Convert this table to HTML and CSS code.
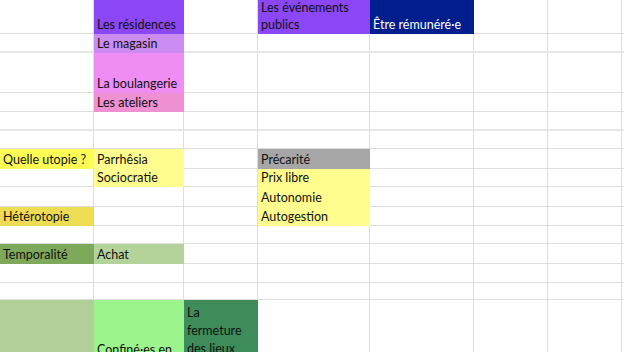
FILE: index.html
```html
<!DOCTYPE html>
<html lang="fr">
<head>
<meta charset="utf-8">
<title>Feuille</title>
<link rel="stylesheet" href="styles.css">
</head>
<body>
<div class="sheet">
  <!-- row 1 -->
  <div class="c r1"></div><div class="c r1 purple">Les résidences</div><div class="c r1"></div><div class="c r1 purple tight">Les événements publics</div><div class="c r1 navy">Être rémunéré·e</div><div class="c r1"></div><div class="c r1"></div><div class="c r1"></div>
  <!-- row 2 -->
  <div class="c r2 thick"></div><div class="c r2 mauve">Le magasin</div><div class="c r2 thick"></div><div class="c r2 thick"></div><div class="c r2 thick"></div><div class="c r2 thick"></div><div class="c r2 thick"></div><div class="c r2 thick"></div>
  <!-- row 3 -->
  <div class="c r3"></div><div class="c r3 orchid">La boulangerie</div><div class="c r3"></div><div class="c r3"></div><div class="c r3"></div><div class="c r3"></div><div class="c r3"></div><div class="c r3"></div>
  <!-- row 4 -->
  <div class="c r4"></div><div class="c r4 pink">Les ateliers</div><div class="c r4"></div><div class="c r4"></div><div class="c r4"></div><div class="c r4"></div><div class="c r4"></div><div class="c r4"></div>
  <!-- row 5 -->
  <div class="c r5 thick"></div><div class="c r5 thick"></div><div class="c r5 thick"></div><div class="c r5 thick"></div><div class="c r5 thick"></div><div class="c r5 thick"></div><div class="c r5 thick"></div><div class="c r5 thick"></div>
  <!-- row 6 -->
  <div class="c r6"></div><div class="c r6"></div><div class="c r6"></div><div class="c r6"></div><div class="c r6"></div><div class="c r6"></div><div class="c r6"></div><div class="c r6"></div>
  <!-- row 7 -->
  <div class="c r7 lemon">Quelle utopie ?</div><div class="c r7 cream">Parrhêsia</div><div class="c r7"></div><div class="c r7 grey">Précarité</div><div class="c r7"></div><div class="c r7"></div><div class="c r7"></div><div class="c r7"></div>
  <!-- row 8 -->
  <div class="c r8"></div><div class="c r8 cream">Sociocratie</div><div class="c r8"></div><div class="c r8 cream">Prix libre</div><div class="c r8"></div><div class="c r8"></div><div class="c r8"></div><div class="c r8"></div>
  <!-- row 9 -->
  <div class="c r9"></div><div class="c r9"></div><div class="c r9"></div><div class="c r9 cream">Autonomie</div><div class="c r9"></div><div class="c r9"></div><div class="c r9"></div><div class="c r9"></div>
  <!-- row 10 -->
  <div class="c r10 mustard">Hétérotopie</div><div class="c r10"></div><div class="c r10"></div><div class="c r10 cream">Autogestion</div><div class="c r10"></div><div class="c r10"></div><div class="c r10"></div><div class="c r10"></div>
  <!-- row 11 -->
  <div class="c r11"></div><div class="c r11"></div><div class="c r11"></div><div class="c r11"></div><div class="c r11"></div><div class="c r11"></div><div class="c r11"></div><div class="c r11"></div>
  <!-- row 12 -->
  <div class="c r12 olive">Temporalité</div><div class="c r12 sage">Achat</div><div class="c r12"></div><div class="c r12"></div><div class="c r12"></div><div class="c r12"></div><div class="c r12"></div><div class="c r12"></div>
  <!-- row 13 -->
  <div class="c r13"></div><div class="c r13"></div><div class="c r13"></div><div class="c r13"></div><div class="c r13"></div><div class="c r13"></div><div class="c r13"></div><div class="c r13"></div>
  <!-- row 14 -->
  <div class="c r14"></div><div class="c r14"></div><div class="c r14"></div><div class="c r14"></div><div class="c r14"></div><div class="c r14"></div><div class="c r14"></div><div class="c r14"></div>
  <!-- row 15 -->
  <div class="c r15 moss"></div><div class="c r15 mint top-pad">Confiné·es en confinement</div><div class="c r15 forest top">La fermeture des lieux culturels</div><div class="c r15"></div><div class="c r15"></div><div class="c r15"></div><div class="c r15"></div><div class="c r15"></div>
</div>
</body>
</html>
```

FILE: styles.css
```css
html, body {
  margin: 0;
  padding: 0;
  background: #ffffff;
  overflow: hidden;
}

.sheet {
  display: grid;
  grid-template-columns: 94px 90px 74px 112px 104px 74px 74px 1fr;
  grid-template-rows: 34px 19px 40px 19px 19px 18px 20px 18px 20px 19px 18px 20px 19px 17px 80px;
  width: 624px;
  height: 352px;
  overflow: hidden;
  font-family: Lato, "Open Sans", sans-serif;
  font-size: 12.5px;
  line-height: 16px;
  color: #111111;
}

.c {
  box-sizing: border-box;
  border-right: 1px solid #dddddd;
  border-bottom: 1px solid #dddddd;
  padding: 0 3px;
  display: flex;
  flex-direction: column;
  justify-content: flex-end;
  overflow: hidden;
  white-space: normal;
}

.thick {
  border-bottom: 2px solid #e6e6e6;
}

.tight {
  line-height: 17px;
}

.top {
  justify-content: flex-start;
  line-height: 18px;
  padding-top: 4px;
}

.top-pad {
  justify-content: flex-start;
  padding-top: 42px;
}

.purple { background: #8b47f5; border-color: transparent; }
.mauve { background: #cc8bf1; border-color: transparent; }
.orchid { background: #ef8df4; border-color: transparent; }
.pink { background: #ee90d2; border-color: transparent; }
.navy { background: #001e8c; color: #ffffff; border-color: transparent; }
.lemon { background: #fefd55; border-color: transparent; }
.cream { background: #fffd8e; border-color: transparent; }
.mustard { background: #eedc52; border-color: transparent; }
.grey { background: #a6a6a6; border-color: transparent; }
.olive { background: #7ea85a; border-color: transparent; }
.sage { background: #b4d39b; border-color: transparent; }
.moss { background: #b3cf99; border-color: transparent; }
.mint { background: #9cf48d; border-color: transparent; }
.forest { background: #3e8c5a; border-color: transparent; }
```
